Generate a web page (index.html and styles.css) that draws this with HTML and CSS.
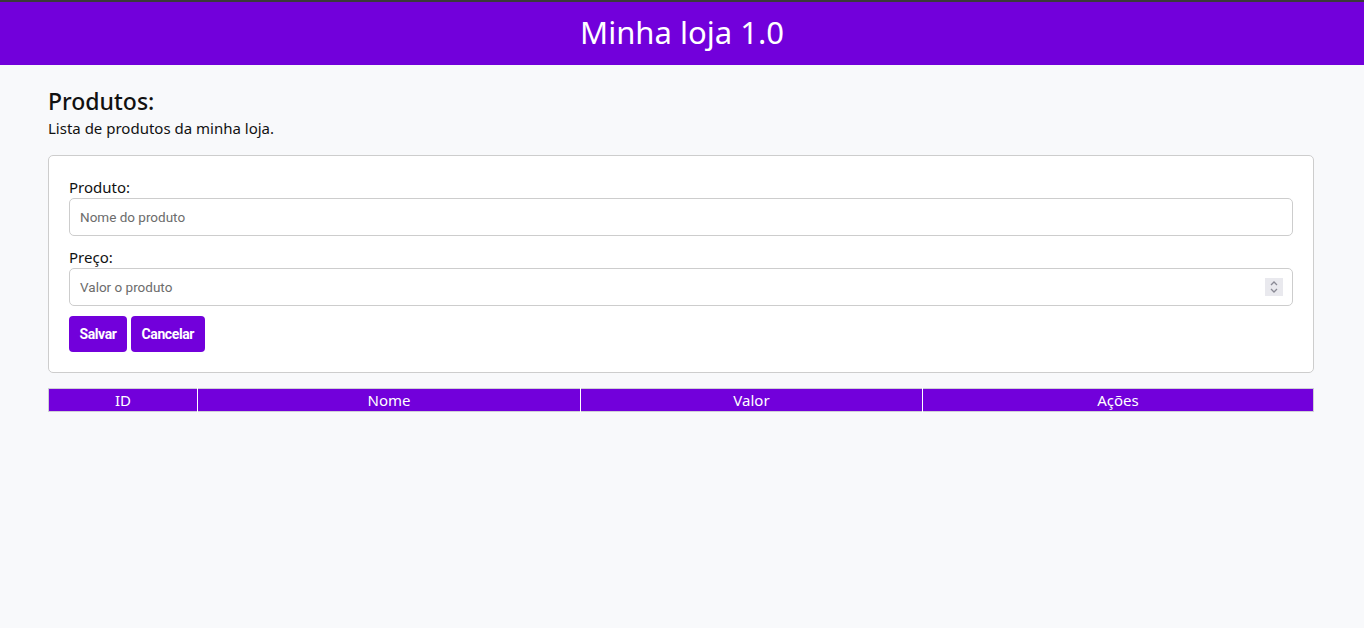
FILE: index.html
```html
<!DOCTYPE html>
<html lang="pt-BR">
<head>
<meta charset="utf-8">
<title>Minha loja 1.0</title>
<link rel="stylesheet" href="styles.css">
</head>
<body>
<header class="topbar">
  <h1 class="brand">Minha loja 1.0</h1>
</header>
<main class="content">
  <h2 class="page-title">Produtos:</h2>
  <p class="page-sub">Lista de produtos da minha loja.</p>
  <form class="card">
    <label class="field-label" for="nome">Produto:</label>
    <input class="field" id="nome" type="text" placeholder="Nome do produto">
    <label class="field-label" for="valor">Preço:</label>
    <div class="field number-field">
      <span class="ph">Valor o produto</span>
      <span class="spinner">
        <svg width="10" height="14" viewBox="0 0 10 14"><path d="M2 5 L5 2 L8 5 M2 9 L5 12 L8 9" fill="none" stroke="#8a8a95" stroke-width="1.3"/></svg>
      </span>
    </div>
    <div class="actions">
      <button type="button" class="btn">Salvar</button>
      <button type="button" class="btn">Cancelar</button>
    </div>
  </form>
  <table class="grid">
    <thead>
      <tr>
        <th class="c-id">ID</th>
        <th class="c-nome">Nome</th>
        <th class="c-valor">Valor</th>
        <th class="c-acoes">Ações</th>
      </tr>
    </thead>
  </table>
</main>
</body>
</html>
```
FILE: styles.css
```css
* { box-sizing: border-box; }
html, body { margin: 0; padding: 0; }
body {
  background: #f8f9fb;
  font-family: "Noto Sans", "Open Sans", sans-serif;
  color: #111;
  border-top: 2px solid #3a3a3a;
}
.topbar {
  background: #7200db;
  height: 63px;
  display: flex;
  align-items: center;
  justify-content: center;
}
.brand {
  margin: 0;
  color: #fff;
  font-weight: 400;
  font-size: 31px;
  line-height: 1;
  padding-bottom: 2px;
}
.content {
  padding: 22px 50px 0 48px;
}
.page-title {
  margin: 0;
  font-weight: 500;
  font-size: 23px;
  line-height: 28px;
}
.page-sub {
  margin: 3px 0 0 0;
  font-size: 15px;
  line-height: 20px;
}
.card {
  margin-top: 17px;
  background: #fff;
  border: 1px solid #cdcdcd;
  border-radius: 5px;
  padding: 20px;
  display: flex;
  flex-direction: column;
}
.field-label {
  font-size: 15px;
  line-height: 22px;
}
.field {
  height: 38px;
  border: 1px solid #cdcdcd;
  border-radius: 5px;
  background: #fff;
  padding: 0 10px;
  font-family: "Roboto", sans-serif;
  font-size: 13.5px;
  line-height: 36px;
  color: #333;
  width: 100%;
  outline: none;
}
.field::placeholder { color: #6c6c6c; }
#nome { margin-bottom: 10px; }
.number-field {
  display: flex;
  align-items: center;
  justify-content: space-between;
}
.ph { color: #6c6c6c; }
.spinner {
  width: 18px;
  height: 18px;
  background: #e9e9ee;
  display: flex;
  align-items: center;
  justify-content: center;
  margin-right: -1px;
}
.actions {
  display: flex;
  gap: 4px;
  margin-top: 10px;
}
.btn {
  background: #7200db;
  color: #fff;
  border: none;
  border-radius: 4px;
  height: 36px;
  padding: 0 10.5px;
  font-family: "Roboto", sans-serif;
  font-weight: 700;
  font-size: 14px;
  letter-spacing: -0.4px;
}
.grid {
  margin-top: 15px;
  width: 100%;
  border-collapse: collapse;
  border: 1px solid #cfcfd6;
}
.grid th {
  background: #7200db;
  color: #fff;
  font-weight: 400;
  font-size: 15px;
  height: 23px;
  padding: 0;
  line-height: 21px;
  border-left: 1px solid #fff;
}
.grid th:first-child { border-left: none; }
.c-id { width: 149px; }
.c-nome { width: 383px; }
.c-valor { width: 342px; }
```
